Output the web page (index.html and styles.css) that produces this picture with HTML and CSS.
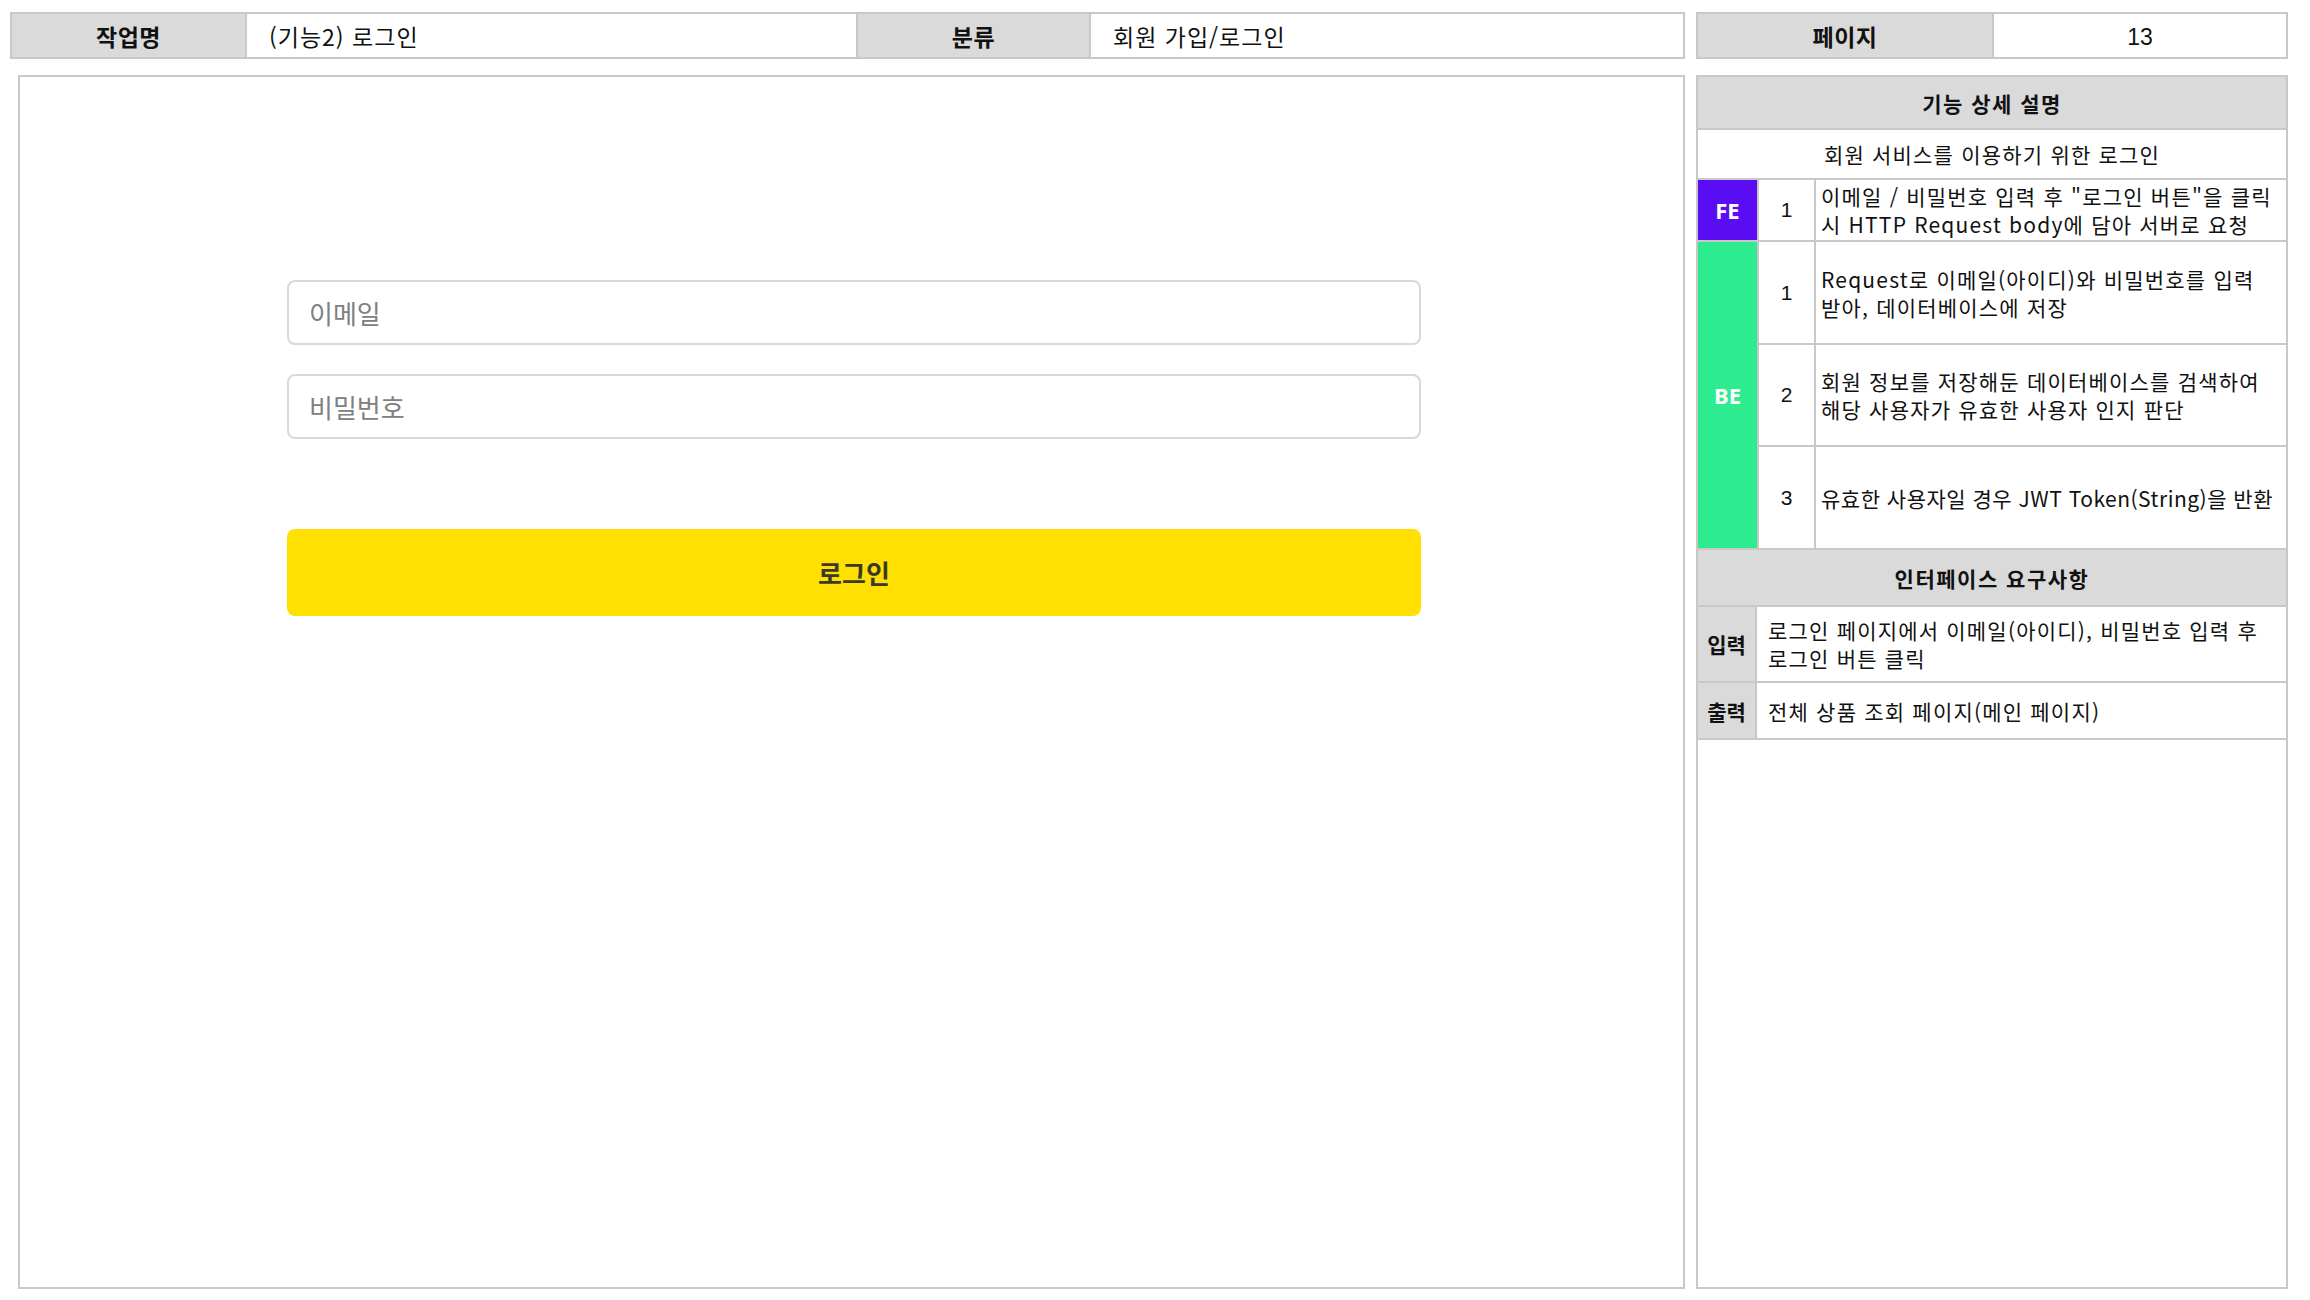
FILE: index.html
```html
<!DOCTYPE html>
<html lang="ko">
<head>
<meta charset="utf-8">
<title>(기능2) 로그인</title>
<link rel="stylesheet" href="styles.css">
</head>
<body>
<div class="page">
  <div class="col-left">
    <div class="bar">
      <div class="cell label w-label">작업명</div>
      <div class="cell value w-title">(기능2) 로그인</div>
      <div class="cell label w-label2">분류</div>
      <div class="cell value grow">회원 가입/로그인</div>
    </div>
    <div class="screen">
      <div class="login">
        <div class="input">이메일</div>
        <div class="input">비밀번호</div>
        <div class="btn">로그인</div>
      </div>
    </div>
  </div>
  <div class="col-right">
    <div class="bar">
      <div class="cell label half">페이지</div>
      <div class="cell num grow">13</div>
    </div>
    <div class="spec">
      <div class="row head h-head">기능 상세 설명</div>
      <div class="row desc h-desc">회원 서비스를 이용하기 위한 로그인</div>
      <div class="group">
        <div class="tag fe">FE</div>
        <div class="items">
          <div class="item h-fe"><div class="no">1</div><div class="txt">이메일 / 비밀번호 입력 후 "로그인 버튼"을 클릭<br>시 HTTP Request body에 담아 서버로 요청</div></div>
        </div>
      </div>
      <div class="group">
        <div class="tag be">BE</div>
        <div class="items">
          <div class="item h-be1"><div class="no">1</div><div class="txt">Request로 이메일(아이디)와 비밀번호를 입력<br>받아, 데이터베이스에 저장</div></div>
          <div class="item h-be2"><div class="no">2</div><div class="txt">회원 정보를 저장해둔 데이터베이스를 검색하여<br>해당 사용자가 유효한 사용자 인지 판단</div></div>
          <div class="item h-be3"><div class="no">3</div><div class="txt tight">유효한 사용자일 경우 JWT Token(String)을 반환</div></div>
        </div>
      </div>
      <div class="row head h-ihead">인터페이스 요구사항</div>
      <div class="io h-in"><div class="io-label">입력</div><div class="io-txt">로그인 페이지에서 이메일(아이디), 비밀번호 입력 후<br>로그인 버튼 클릭</div></div>
      <div class="io h-out"><div class="io-label">출력</div><div class="io-txt">전체 상품 조회 페이지(메인 페이지)</div></div>
    </div>
  </div>
</div>
</body>
</html>
```

FILE: styles.css
```css
* { box-sizing: border-box; }
html, body { margin: 0; padding: 0; background: #fff; }
body {
  font-family: "Noto Sans CJK KR", "Noto Sans", sans-serif;
  color: #111;
}
.page {
  display: flex;
  gap: 11px;
  padding: 12px 10px 5px 10px;
  width: 2310px;
  height: 1300px;
}
.col-left { width: 1675px; display: flex; flex-direction: column; flex-shrink: 0; }
.col-right { width: 592px; display: flex; flex-direction: column; flex-shrink: 0; }

.bar {
  display: flex;
  height: 47px;
  border: 2px solid #c8c8c8;
}
.cell {
  display: flex;
  align-items: center;
  font-size: 23px;
  border-right: 2px solid #c8c8c8;
  flex-shrink: 0;
}
.cell:last-child { border-right: none; }
.label {
  background: #dadada;
  justify-content: center;
  font-weight: 700;
  letter-spacing: 0.5px;
}
.value { padding-left: 22px; background: #fff; letter-spacing: 1px; }
.w-label { width: 235px; }
.w-title { width: 611px; }
.w-label2 { width: 233px; }
.grow { flex: 1; }
.half { width: 296px; }
.num {
  justify-content: center;
  font-family: "Liberation Sans", Arial, sans-serif;
  font-size: 23px;
  padding-top: 4px;
}

.screen {
  margin: 16px 0 0 8px;
  height: 1214px;
  border: 2px solid #c8c8c8;
  display: flex;
  justify-content: center;
  padding-left: 5px;
}
.login {
  width: 1134px;
  margin-top: 203px;
  display: flex;
  flex-direction: column;
}
.input {
  height: 65px;
  border: 2px solid #d9d9d9;
  border-radius: 8px;
  display: flex;
  align-items: center;
  padding-left: 20px;
  font-size: 26px;
  color: #808080;
  margin-bottom: 29px;
}
.btn {
  margin-top: 61px;
  height: 87px;
  background: #ffe000;
  border-radius: 8px;
  display: flex;
  align-items: center;
  justify-content: center;
  font-size: 26px;
  font-weight: 700;
  color: #3a3a2a;
}

.spec {
  margin-top: 16px;
  height: 1214px;
  border: 2px solid #c8c8c8;
  display: flex;
  flex-direction: column;
  font-size: 21px;
}
.row {
  display: flex;
  align-items: center;
  justify-content: center;
  border-bottom: 2px solid #c8c8c8;
  flex-shrink: 0;
}
.desc { letter-spacing: 1.2px; }
.head { background: #dadada; font-weight: 700; letter-spacing: 1.5px; }
.h-head { height: 53px; }
.h-desc { height: 50px; }
.h-ihead { height: 57px; }

.group { display: flex; border-bottom: 2px solid #c8c8c8; flex-shrink: 0; }
.tag {
  width: 59px;
  flex-shrink: 0;
  display: flex;
  align-items: center;
  justify-content: center;
  color: #fff;
  font-family: "Noto Sans", "Liberation Sans", sans-serif;
  font-weight: 700;
  font-size: 22px;
}
.fe { background: #5a0cf2; }
.be { background: #2deb8f; }
.items { flex: 1; min-width: 0; display: flex; flex-direction: column; }
.item { display: flex; border-bottom: 2px solid #c8c8c8; }
.item:last-child { border-bottom: none; }
.h-fe { height: 60px; }
.h-be1 { height: 103px; }
.h-be2 { height: 102px; }
.h-be3 { height: 101px; }
.no {
  width: 59px;
  flex-shrink: 0;
  border-left: 2px solid #c8c8c8;
  border-right: 2px solid #c8c8c8;
  display: flex;
  align-items: center;
  justify-content: center;
  font-family: "Liberation Sans", Arial, sans-serif;
  font-size: 21px;
}
.txt {
  flex: 1;
  min-width: 0;
  display: flex;
  align-items: center;
  padding-left: 5px;
  line-height: 28px;
  letter-spacing: 1.2px;
  white-space: nowrap;
}
.txt.tight { letter-spacing: 0.5px; }

.io { display: flex; border-bottom: 2px solid #c8c8c8; flex-shrink: 0; }
.h-in { height: 76px; }
.h-out { height: 57px; }
.io-label {
  width: 59px;
  flex-shrink: 0;
  background: #dadada;
  border-right: 2px solid #c8c8c8;
  display: flex;
  align-items: center;
  justify-content: center;
  font-weight: 700;
}
.io-txt {
  flex: 1;
  min-width: 0;
  display: flex;
  align-items: center;
  padding-left: 11px;
  line-height: 28px;
  letter-spacing: 1.2px;
  white-space: nowrap;
}
```
